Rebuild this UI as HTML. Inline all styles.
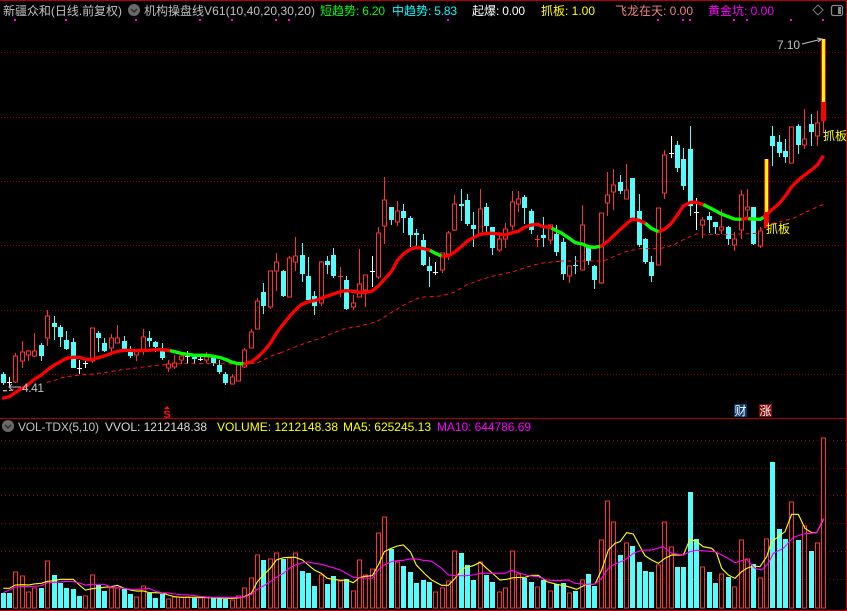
<!DOCTYPE html>
<html><head><meta charset="utf-8"><style>
html,body{margin:0;padding:0;background:#000;width:847px;height:611px;overflow:hidden}
svg{display:block}
text{font-family:"Liberation Sans","WenQuanYi Zen Hei","Noto Sans CJK SC",sans-serif;font-size:12px}
</style></head><body>
<svg width="847" height="611" viewBox="0 0 847 611" xmlns="http://www.w3.org/2000/svg">
<rect width="847" height="611" fill="#000"/>
<!-- borders -->
<g shape-rendering="crispEdges">
<rect x="0" y="0" width="847" height="1" fill="#b00000"/>
<rect x="0" y="418" width="847" height="1" fill="#b00000"/>
<rect x="0" y="610" width="847" height="1" fill="#b00000"/>
<rect x="846" y="0" width="1" height="611" fill="#b00000"/>
<!-- grid -->
<g stroke="#900000" stroke-width="1" stroke-dasharray="1 2" fill="none">
<path d="M1 52.5H846M1 117.5H846M1 181.5H846M1 245.5H846M1 310.5H846M1 374.5H846"/>
</g>
<g stroke="#a00000" stroke-width="1" stroke-dasharray="1 3" fill="none">
<path d="M1 440.5H846M1 468.5H846M1 495.5H846M1 523.5H846M1 551.5H846M1 579.5H846"/>
</g>
<!-- magenta dots -->
<path fill="#ff00ff" d="M14 19h2v2h-2zM65 19h2v2h-2zM135 19h2v2h-2zM199 19h2v2h-2zM231 19h2v2h-2zM275 19h2v2h-2zM288 19h2v2h-2zM447 19h2v2h-2zM657 19h2v2h-2zM682 19h2v2h-2zM689 19h2v2h-2zM733 19h2v2h-2zM746 19h2v2h-2zM790 19h2v2h-2zM822 19h2v2h-2z"/>
<!-- cyan wicks -->
<path fill="none" stroke="#54fcfc" stroke-width="1" d="M3.5 372V385M41.5 343V361M54.5 316V340M60.5 325V347M66.5 331V350M73.5 338V368M98.5 331V352M104.5 338V352M124.5 336V350M130.5 346V358M149.5 331V347M155.5 341V352M162.5 343V360M194.5 355V364M213.5 355V366M219.5 360V374M225.5 372V385M263.5 283V314M283.5 270V297M302.5 243V282M308.5 257V300M314.5 291V315M327.5 256V274M333.5 248V278M346.5 276V310M391.5 207V225M403.5 204V233M410.5 216V247M416.5 229V246M423.5 234V266M429.5 257V287M461.5 189V221M467.5 194V226M473.5 212V247M486.5 203V233M492.5 227V255M524.5 195V224M531.5 209V234M543.5 217V247M556.5 225V256M563.5 238V280M588.5 247V265M594.5 265V289M620.5 175V194M632.5 178V220M639.5 194V247M645.5 238V264M651.5 256V282M677.5 141V172M683.5 148V190M690.5 126V216M709.5 212V233M715.5 222V234M728.5 226V245M753.5 207V245M772.5 126V166M779.5 135V157M785.5 139V163M798.5 124V154M811.5 114V146M575.5 256V274M573 265.5H578M3 390.5H7M9 390.5H13"/>
<!-- cyan bodies -->
<path fill="#54fcfc" d="M1 374h5v9h-5zM39 345h5v11h-5zM52 323h5v4h-5zM58 327h5v10h-5zM64 340h5v9h-5zM71 342h5v26h-5zM96 333h5v5h-5zM102 343h5v8h-5zM122 341h5v8h-5zM128 352h5v4h-5zM147 338h5v3h-5zM153 342h5v5h-5zM160 350h5v8h-5zM192 357h5v2h-5zM211 358h5v5h-5zM217 365h5v7h-5zM223 374h5v9h-5zM261 292h5v14h-5zM281 271h5v25h-5zM300 255h5v19h-5zM306 276h5v24h-5zM312 296h5v10h-5zM325 261h5v4h-5zM331 255h5v21h-5zM344 280h5v29h-5zM389 207h5v13h-5zM401 211h5v7h-5zM408 218h5v17h-5zM414 233h5v2h-5zM421 240h5v25h-5zM427 266h5v5h-5zM459 204h5v2h-5zM465 200h5v24h-5zM471 225h5v4h-5zM484 207h5v19h-5zM490 227h5v21h-5zM522 197h5v11h-5zM529 211h5v19h-5zM541 235h5v3h-5zM554 234h5v18h-5zM561 242h5v32h-5zM586 247h5v14h-5zM592 266h5v14h-5zM618 182h5v9h-5zM630 178h5v40h-5zM637 211h5v34h-5zM643 239h5v23h-5zM649 262h5v14h-5zM675 145h5v23h-5zM681 159h5v27h-5zM688 149h5v57h-5zM707 216h5v4h-5zM713 222h5v5h-5zM726 227h5v12h-5zM751 207h5v37h-5zM770 136h5v10h-5zM777 142h5v11h-5zM783 151h5v6h-5zM796 126h5v19h-5zM809 124h5v8h-5z"/>
<!-- red candles -->
<path fill="none" stroke="#ff3232" stroke-width="1" d="M13.5 356h4v26h-4zM15.5 353V356M15.5 382V383M20.5 352h4v9h-4zM22.5 341V352M22.5 361V368M26.5 351h4v4h-4zM28.5 350V351M28.5 355V361M32.5 351h4v5h-4zM34.5 333V351M34.5 356V357M45.5 316h4v22h-4zM47.5 310V316M47.5 338V346M90.5 328h4v33h-4zM92.5 361V363M109.5 338h4v10h-4zM111.5 334V338M111.5 348V352M115.5 338h4v5h-4zM117.5 325V338M134.5 351h4v4h-4zM136.5 350V351M136.5 355V361M141.5 337h4v13h-4zM143.5 329V337M143.5 350V355M166.5 364h4v4h-4zM168.5 360V364M168.5 368V372M172.5 363h4v4h-4zM174.5 355V363M174.5 367V369M179.5 356h4v4h-4zM181.5 355V356M181.5 360V364M204.5 357h4v3h-4zM206.5 352V357M206.5 360V363M230.5 377h4v7h-4zM232.5 374V377M236.5 365h4v16h-4zM238.5 363V365M242.5 350h4v17h-4zM244.5 348V350M244.5 367V368M249.5 332h4v16h-4zM251.5 329V332M255.5 301h4v28h-4zM257.5 298V301M268.5 271h4v36h-4zM270.5 307V309M274.5 262h4v9h-4zM276.5 253V262M276.5 271V291M287.5 258h4v39h-4zM289.5 256V258M293.5 256h4v6h-4zM295.5 237V256M295.5 262V271M319.5 262h4v41h-4zM321.5 261V262M321.5 303V306M338 276.5H343M340.5 267V297M351.5 303h4v4h-4zM353.5 295V303M353.5 307V310M357.5 284h4v13h-4zM359.5 249V284M363.5 275h4v15h-4zM365.5 290V307M376.5 233h4v44h-4zM378.5 227V233M378.5 277V279M382.5 200h4v26h-4zM384.5 177V200M384.5 226V244M395.5 211h4v11h-4zM397.5 201V211M397.5 222V226M440.5 253h4v17h-4zM442.5 270V273M446.5 233h4v21h-4zM448.5 231V233M448.5 254V260M452.5 204h4v26h-4zM454.5 195V204M454.5 230V231M478.5 209h4v25h-4zM480.5 189V209M480.5 234V235M497.5 239h4v11h-4zM499.5 235V239M499.5 250V252M503.5 229h4v10h-4zM505.5 223V229M505.5 239V248M510.5 202h4v24h-4zM512.5 191V202M512.5 226V230M516.5 199h4v5h-4zM518.5 191V199M518.5 204V212M535 239.5H540M537.5 235V247M548.5 225h4v15h-4zM550.5 240V244M567.5 266h4v10h-4zM569.5 276V283M580.5 225h4v45h-4zM582.5 205V225M599.5 213h4v70h-4zM601.5 283V284M605.5 195h4v8h-4zM607.5 172V195M607.5 203V216M611.5 185h4v7h-4zM613.5 169V185M613.5 192V210M624.5 190h4v9h-4zM626.5 164V190M656.5 208h4v57h-4zM662.5 155h4v38h-4zM664.5 150V155M664.5 193V199M700.5 220h4v5h-4zM702.5 217V220M702.5 225V238M719.5 227h4v3h-4zM721.5 209V227M721.5 230V234M732.5 239h4v6h-4zM734.5 232V239M734.5 245V251M739.5 195h4v35h-4zM741.5 190V195M741.5 230V239M745.5 207h4v3h-4zM747.5 189V207M747.5 210V220M758.5 231h4v15h-4zM760.5 227V231M760.5 246V248M789.5 127h4v36h-4zM802.5 139h4v6h-4zM804.5 109V139M804.5 145V149M815.5 123h4v13h-4zM817.5 111V123M817.5 136V146M823.5 121V133"/>
<!-- white crosses -->
<path fill="none" stroke="#ffffff" stroke-width="1" d="M9.5 377V387M7 382.5H12M79.5 360V374M77 368.5H82M85.5 361V368M83 363.5H88M187.5 351V364M185 356.5H190M200.5 357V361M198 359.5H203M372.5 256V287M370 271.5H375M435.5 262V275M433 272.5H438M671.5 136V158M669 153.5H674M696.5 198V230M694 212.5H699"/>
<!-- limit-up bands -->
<rect x="764" y="159" width="5" height="69" fill="#ff0000"/><rect x="765" y="159" width="3" height="53" fill="#ffff00"/>
<rect x="821" y="39" width="5" height="82" fill="#ff0000"/><rect x="822" y="39" width="3" height="63" fill="#ffff00"/>
<!-- volume cyan -->
<path fill="#54fcfc" d="M1 593h5v15h-5zM7 593h5v15h-5zM39 588h5v20h-5zM52 575h5v33h-5zM58 583h5v25h-5zM64 588h5v20h-5zM71 589h5v19h-5zM77 596h5v12h-5zM96 585h5v23h-5zM102 591h5v17h-5zM122 589h5v19h-5zM128 594h5v14h-5zM147 593h5v15h-5zM153 598h5v10h-5zM160 594h5v14h-5zM192 598h5v10h-5zM211 598h5v10h-5zM217 598h5v10h-5zM223 599h5v9h-5zM261 560h5v48h-5zM281 559h5v49h-5zM300 571h5v37h-5zM306 573h5v35h-5zM312 586h5v22h-5zM325 584h5v24h-5zM331 576h5v32h-5zM344 579h5v29h-5zM389 549h5v59h-5zM401 566h5v42h-5zM408 572h5v36h-5zM414 583h5v25h-5zM421 580h5v28h-5zM427 582h5v26h-5zM459 553h5v55h-5zM465 565h5v43h-5zM471 580h5v28h-5zM484 575h5v33h-5zM490 582h5v26h-5zM522 578h5v30h-5zM529 582h5v26h-5zM541 580h5v28h-5zM554 584h5v24h-5zM561 583h5v25h-5zM573 591h5v17h-5zM586 574h5v34h-5zM592 586h5v22h-5zM618 555h5v53h-5zM630 546h5v62h-5zM637 562h5v46h-5zM643 571h5v37h-5zM649 572h5v36h-5zM675 567h5v41h-5zM681 567h5v41h-5zM688 492h5v116h-5zM694 539h5v69h-5zM707 572h5v36h-5zM713 583h5v25h-5zM726 577h5v31h-5zM751 564h5v44h-5zM770 462h5v146h-5zM777 529h5v79h-5zM783 539h5v69h-5zM796 540h5v68h-5zM809 551h5v57h-5z"/>
<!-- volume red -->
<path fill="none" stroke="#ff3232" stroke-width="1" d="M13.5 572h4v36h-4zM20.5 576h4v32h-4zM26.5 592h4v16h-4zM32.5 588h4v20h-4zM45.5 561h4v47h-4zM83.5 596h4v12h-4zM90.5 575h4v33h-4zM109.5 588h4v20h-4zM115.5 588h4v20h-4zM134.5 597h4v11h-4zM141.5 586h4v22h-4zM166.5 599h4v9h-4zM172.5 597h4v11h-4zM179.5 597h4v11h-4zM185.5 597h4v11h-4zM198.5 598h4v10h-4zM204.5 597h4v11h-4zM230.5 600h4v8h-4zM236.5 596h4v12h-4zM242.5 588h4v20h-4zM249.5 578h4v30h-4zM255.5 555h4v53h-4zM268.5 559h4v49h-4zM274.5 553h4v55h-4zM287.5 558h4v50h-4zM293.5 553h4v55h-4zM319.5 575h4v33h-4zM338.5 581h4v27h-4zM351.5 591h4v17h-4zM357.5 560h4v48h-4zM363.5 575h4v33h-4zM370.5 569h4v39h-4zM376.5 533h4v75h-4zM382.5 517h4v91h-4zM395.5 562h4v46h-4zM433.5 592h4v16h-4zM440.5 588h4v20h-4zM446.5 581h4v27h-4zM452.5 551h4v57h-4zM478.5 562h4v46h-4zM497.5 592h4v16h-4zM503.5 588h4v20h-4zM510.5 551h4v57h-4zM516.5 574h4v34h-4zM535.5 587h4v21h-4zM548.5 591h4v17h-4zM567.5 593h4v15h-4zM580.5 580h4v28h-4zM599.5 540h4v68h-4zM605.5 501h4v107h-4zM611.5 522h4v86h-4zM624.5 543h4v65h-4zM656.5 565h4v43h-4zM662.5 522h4v86h-4zM669.5 547h4v61h-4zM700.5 567h4v41h-4zM719.5 574h4v34h-4zM732.5 587h4v21h-4zM739.5 540h4v68h-4zM745.5 559h4v49h-4zM758.5 578h4v30h-4zM764.5 539h4v69h-4zM789.5 502h4v106h-4zM802.5 526h4v82h-4zM815.5 543h4v65h-4zM821.5 438h4v170h-4z"/>
<!-- badges -->
<rect x="734" y="404" width="13" height="13" fill="#0c3a6e"/>
<rect x="759" y="404" width="13" height="13" fill="#800808"/>
</g>
<!-- MA dashed -->
<g transform="translate(0,200) scale(.33333)" fill="none" stroke="#ff1010" stroke-width="3" stroke-dasharray="12 10">
<polyline points="10,575 30,572 45,566"/>
<polyline points="140,547 160,543 180,535 200,530 220,528 240,525 280,522 320,517 360,510 400,505 440,500 480,495 520,492 560,491 600,491 660,491 700,492 740,491 770,490 790,480 820,465 840,459"/>
</g>
<g transform="translate(280,170) scale(.33333)" fill="none" stroke="#ff1010" stroke-width="3" stroke-dasharray="12 10">
<polyline points="0,549 60,525 120,505 190,477 240,468 290,455 340,424 380,400 420,382 480,378 520,368 560,345 600,330 640,318 700,305 760,285 800,277 840,274"/>
</g>
<g transform="translate(560,110) scale(.33333)" fill="none" stroke="#ff1010" stroke-width="3" stroke-dasharray="12 10">
<polyline points="0,453 130,453 160,440 200,424 240,416 300,416 340,405 380,384 410,372 500,374 590,370 620,345 660,335 700,325 740,305 790,283"/>
</g>
<!-- main MA -->
<g transform="translate(0,200) scale(.33333)" fill="none" stroke-width="10" stroke-linejoin="round" stroke-linecap="round">
<polyline stroke="#ff0000" points="10,594 28,590 46,578 64,566 82,556 100,540 124,525 142,510 163,495 181,485 199,475 220,472 238,472 256,478 277,478 295,473 313,468 334,460 352,454 373,451 391,451 409,452 430,451 448,451 466,449 487,449 505,451 523,455 544,460 562,463 583,466 601,466 619,466 640,469 658,472 676,478 697,487 715,491 733,491 754,486 772,472 790,455 811,430 829,400 840,385"/>
<polyline stroke="#00ff00" stroke-linecap="butt" points="510,452 523,455 544,460 562,463 583,466 601,466 619,466 640,469 658,472 676,478 697,487 715,491 730,491"/>
</g>
<g transform="translate(280,170) scale(.33333)" fill="none" stroke-width="10" stroke-linejoin="round">
<polyline stroke="#ff0000" points="0,475 10,462 28,440 46,420 64,404 85,395 103,392 124,385 142,378 160,372 181,365 199,362 220,364 238,367 256,367 277,363 295,348 313,328 334,305 352,272 370,252 391,238 409,232 427,235 448,240 466,250 484,258 505,258 523,247 544,230 562,213 580,203 601,193 619,190 637,190 658,192 676,195 697,188 715,184 733,172 754,165 772,163 790,170 811,172 829,182 840,187"/>
<polyline stroke="#00ff00" points="450,241 466,250 484,258"/>
<polyline stroke="#00ff00" points="815,174 829,182 840,187"/>
</g>
<g transform="translate(560,110) scale(.33333)" fill="none" stroke-width="10" stroke-linejoin="round">
<polyline stroke="#ff0000" points="0,366 28,385 46,398 67,402 85,410 103,412 124,408 142,395 160,378 181,358 199,342 217,327 238,331 256,340 274,355 295,365 313,358 334,340 352,315 370,288 391,277 409,277 430,284 448,293 466,302 484,312 505,320 523,327 544,328 562,325 580,327 601,328 619,315 637,298 658,280 676,258 694,232 715,210 733,196 754,180 772,165 790,137"/>
<polyline stroke="#00ff00" points="0,366 28,385 46,398 67,402 85,410 103,412 120,409"/>
<polyline stroke="#00ff00" points="256,340 274,355 295,365"/>
<polyline stroke="#00ff00" points="430,284 448,293 466,302 484,312 505,320 523,327 544,328"/>
<polyline stroke="#00ff00" points="565,326 580,327 601,328 610,322"/>
</g>
<!-- volume MAs -->
<g transform="translate(0,410) scale(.33333)" fill="none" stroke-width="3.4">
<polyline stroke="#ffff00" points="10,535 28,535 46,525 67,524 85,525 103,522 124,520 142,514 163,512 181,508 199,508 220,508 238,525 256,540 277,536 295,534 313,532 334,530 352,526 373,535 391,540 409,543 430,543 448,548 466,548 487,549 505,555 523,560 544,562 562,562 583,562 601,562 619,563 640,563 658,564 676,565 697,565 715,564 733,560 754,550 772,515 790,495 811,475 829,450 850,443 868,442 886,442 907,450 925,465 943,480 964,490 982,505 1000,508 1021,511 1039,510 1060,518 1078,503 1096,499 1117,497 1135,465 1153,425 1174,415 1192,408 1210,405 1231,425 1249,465 1275,492"/>
<polyline stroke="#ff00ff" points="10,548 28,540 46,532 67,529 85,530 103,529 124,527 142,518 163,517 181,516 199,514 220,515 238,519 256,525 277,523 295,523 313,523 334,532 352,533 373,535 391,538 409,538 430,537 448,535 466,544 487,548 505,549 523,552 544,554 562,555 583,557 601,559 619,561 640,562 658,562 676,562 697,562 715,562 733,562 754,553 772,538 790,528 811,515 829,502 850,490 868,475 886,465 907,458 925,456 943,460 964,463 982,468 1000,473 1021,480 1039,490 1060,502 1078,504 1096,504 1117,505 1135,480 1153,465 1174,455 1192,452 1210,451 1231,447 1249,447 1275,452"/>
</g>
<g transform="translate(425,400) scale(.33333)" fill="none" stroke-width="3.4">
<polyline stroke="#ffff00" points="0,522 20,540 50,556 70,556 90,535 115,505 145,497 165,487 185,505 205,522 225,540 245,538 265,533 300,532 320,526 340,526 365,545 395,553 430,560 455,568 480,555 510,552 530,510 550,450 570,430 585,425 605,398 625,402 645,440 660,467 680,480 700,490 720,475 740,465 775,465 795,418 815,425 835,440 860,445 875,460 890,505 910,525 930,535 950,515 965,505 985,498 1005,500 1025,470 1040,425 1060,410 1080,395 1100,343 1120,343 1140,385 1160,398 1175,398 1195,358"/>
<polyline stroke="#ff00ff" points="0,481 20,484 50,505 70,525 90,527 120,527 145,525 165,520 200,520 240,520 260,511 285,520 315,528 340,530 365,540 395,542 430,540 450,550 480,553 510,552 530,535 550,505 570,492 600,480 625,460 650,451 680,450 715,440 740,460 775,465 795,455 815,451 870,455 900,470 930,488 965,478 990,505 1010,510 1030,490 1045,460 1075,445 1105,412 1135,402 1175,398 1195,355"/>
</g>
<!-- header text -->
<g>
<text x="3" y="15" fill="#c0c0c0" textLength="119">新疆众和(日线.前复权)</text>
<circle cx="134" cy="10" r="6" fill="#6a6a6a"/><path d="M131 9l3 3 3-3" fill="none" stroke="#2a2a2a" stroke-width="1.4"/>
<text x="144" y="15" fill="#c0c0c0" textLength="60">机构操盘线</text>
<text x="204" y="15" fill="#c0c0c0" textLength="111">V61(10,40,20,30,20)</text>
<text x="320" y="15" fill="#00ff00" textLength="36">短趋势</text><text x="356" y="15" fill="#00ff00" textLength="29">: 6.20</text>
<text x="392" y="15" fill="#00ffff" textLength="36">中趋势</text><text x="428" y="15" fill="#00ffff" textLength="29">: 5.83</text>
<text x="472" y="15" fill="#ffffff" textLength="24">起爆</text><text x="496" y="15" fill="#ffffff" textLength="29">: 0.00</text>
<text x="541" y="15" fill="#ffff00" textLength="24">抓板</text><text x="565" y="15" fill="#ffff00" textLength="30">: 1.00</text>
<text x="615" y="15" fill="#f08080" textLength="48">飞龙在天</text><text x="663" y="15" fill="#f08080" textLength="30">: 0.00</text>
<text x="708" y="15" fill="#ff00ff" textLength="36">黄金坑</text><text x="744" y="15" fill="#ff00ff" textLength="30">: 0.00</text>
<path d="M818 5l5 5-5 5-5-5z" fill="none" stroke="#777" stroke-width="1"/>
<rect x="831.5" y="5.5" width="11" height="10" rx="2" fill="none" stroke="#888" stroke-width="1.3"/><rect x="838" y="7" width="3" height="7" fill="#888"/>
<!-- chart labels -->
<text x="777" y="49" fill="#c0c0c0" textLength="23">7.10</text>
<path d="M802 44l20-5M817 38l5 1-4 3" fill="none" stroke="#c0c0c0" stroke-width="1"/>
<text x="22" y="392" fill="#c0c0c0" textLength="22">4.41</text>
<path d="M21 387H9M12 384l-3 3 3 3" fill="none" stroke="#c0c0c0" stroke-width="1"/>
<text x="766" y="233" fill="#ffff00" textLength="24">抓板</text>
<text x="823" y="140" fill="#ffff00" textLength="24">抓板</text>
<path d="M167 406l3 3h-6z" fill="#ff1010"/>
<text x="167" y="418" fill="#ff1010" text-anchor="middle" font-weight="bold" style="font-size:11px">S</text>
<text x="734.5" y="415" fill="#fff">财</text>
<text x="759.5" y="415" fill="#fff">涨</text>
<!-- volume header -->
<circle cx="8" cy="426" r="6" fill="#6a6a6a"/><path d="M5 425l3 3 3-3" fill="none" stroke="#2a2a2a" stroke-width="1.4"/>
<text x="18" y="431" fill="#c0c0c0" textLength="81">VOL-TDX(5,10)</text>
<text x="105" y="431" fill="#d8d8d8" textLength="102">VVOL: 1212148.38</text>
<text x="217" y="431" fill="#ffff00" textLength="121">VOLUME: 1212148.38</text>
<text x="343" y="431" fill="#ffff00" textLength="88">MA5: 625245.13</text>
<text x="437" y="431" fill="#ff00ff" textLength="94">MA10: 644786.69</text>
</g>
</svg>
</body></html>
